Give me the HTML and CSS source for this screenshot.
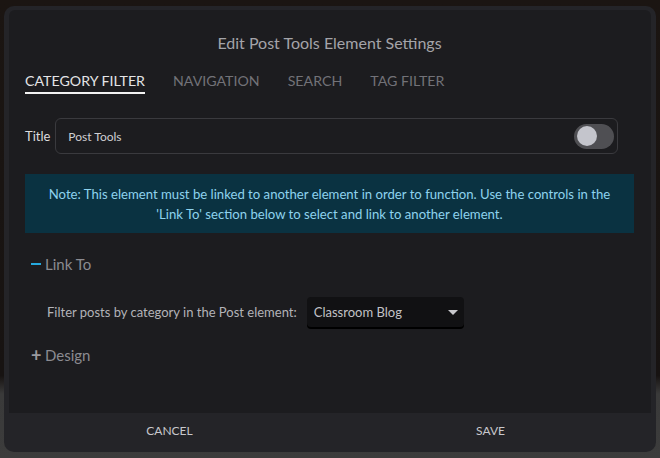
FILE: index.html
```html
<!DOCTYPE html>
<html lang="en">
<head>
    <meta charset="UTF-8">
    <title>Edit Post Tools Element Settings</title>
    <link rel="stylesheet" href="styles.css">
</head>
<body>

    <div class="modal">
        <div class="panel">
            <div class="heading">Edit Post Tools Element Settings</div>

            <div class="tabs">
                <span class="tab active">Category Filter</span>
                <span class="tab">Navigation</span>
                <span class="tab">Search</span>
                <span class="tab">Tag Filter</span>
            </div>

            <div class="title-row">
                <label>Title</label>
                <div class="title-input">
                    <span>Post Tools</span>
                    <span class="toggle"><span class="knob"></span></span>
                </div>
            </div>

            <div class="note">
                Note: This element must be linked to another element in order to function. Use the controls in the
                'Link To' section below to select and link to another element.
            </div>

            <div class="section open">
                <span class="sign minus"></span>Link To
            </div>

            <div class="filter-row">
                <span>Filter posts by category in the Post element:</span>
                <div class="select">
                    <span>Classroom Blog</span>
                    <span class="caret"></span>
                </div>
            </div>

            <div class="section">
                <span class="sign plus">+</span>Design
            </div>
        </div>

        <div class="footer">
            <button>Cancel</button>
            <button>Save</button>
        </div>
    </div>

</body>
</html>
```

FILE: styles.css
```css
* {
    margin: 0;
    padding: 0;
    box-sizing: border-box;
    font-family: 'Lato', 'Liberation Sans', sans-serif;
}

body {
    width: 660px;
    height: 458px;
    overflow: hidden;
    padding: 6px 4px;
    background: linear-gradient(180deg, #1b1512 0%, #171312 82%, #3a3a3a 86%, #3c3c3c 100%);
}

.modal {
    width: 652px;
    height: 446px;
    background-color: #242428;
    border-radius: 10px;
    padding: 4px 5px 0;
    display: flex;
    flex-direction: column;
}

.panel {
    height: 403px;
    background-color: #1c1c1f;
    border-radius: 6px 6px 0 0;
    padding: 23px 17px 0 16px;
}

.heading {
    text-align: center;
    font-size: 16px;
    line-height: 20px;
    color: #a4a4a9;
}

.tabs {
    display: flex;
    gap: 28px;
    margin-top: 18px;
}

.tab {
    font-size: 14.2px;
    line-height: 20px;
    text-transform: uppercase;
    color: #727278;
    padding-bottom: 1px;
    border-bottom: 2px solid transparent;
}

.tab.active {
    color: #e4e4e6;
    border-bottom-color: #f2f2f2;
}

.title-row {
    display: flex;
    align-items: center;
    gap: 5px;
    margin-top: 24px;
    margin-right: 16px;
}

.title-row label {
    font-size: 13px;
    color: #dcdcde;
}

.title-input {
    flex: 1;
    height: 36px;
    border: 1px solid #3a3a3e;
    border-radius: 6px;
    display: flex;
    align-items: center;
    justify-content: space-between;
    padding: 0 3px 0 12px;
    font-size: 12px;
    color: #cfcfd2;
}

.toggle {
    width: 40px;
    height: 25px;
    border-radius: 13px;
    background-color: #4f4f53;
    display: flex;
    align-items: center;
    padding-left: 3px;
}

.knob {
    width: 20px;
    height: 20px;
    border-radius: 50%;
    background-color: #c4c5cc;
}

.note {
    margin-top: 20px;
    background-color: #0a3241;
    color: #8ed3ee;
    font-size: 13.15px;
    line-height: 20px;
    text-align: center;
    padding: 10px 10px 9px;
}

.section {
    display: flex;
    align-items: center;
    margin-top: 21px;
    padding-left: 6px;
    font-size: 15px;
    line-height: 20px;
    color: #8b8b91;
}

.sign {
    width: 11px;
    margin-right: 3px;
}

.sign.minus {
    height: 2px;
    background-color: #25a9de;
    width: 10px;
    margin-right: 4px;
}

.sign.plus {
    font-size: 18px;
    color: #9a9aa0;
    font-weight: bold;
}

.filter-row {
    display: flex;
    align-items: center;
    gap: 10px;
    margin-top: 23px;
    padding-left: 22px;
    font-size: 13px;
    color: #b3b3b8;
}

.select {
    width: 157px;
    height: 30px;
    background-color: #111113;
    border-radius: 4px;
    box-shadow: 0 2px 0 #000;
    display: flex;
    align-items: center;
    justify-content: space-between;
    padding: 0 6px 0 7px;
    color: #c2c2c6;
}

.caret {
    width: 0;
    height: 0;
    border-left: 5px solid transparent;
    border-right: 5px solid transparent;
    border-top: 5px solid #c8c8cc;
}

.filter-row + .section {
    margin-top: 18px;
}

.footer {
    flex: 1;
    display: flex;
}

.footer button {
    flex: 1;
    background: none;
    border: none;
    color: #c8c8cc;
    font-size: 12px;
    text-transform: uppercase;
    padding-bottom: 4px;
}
```
